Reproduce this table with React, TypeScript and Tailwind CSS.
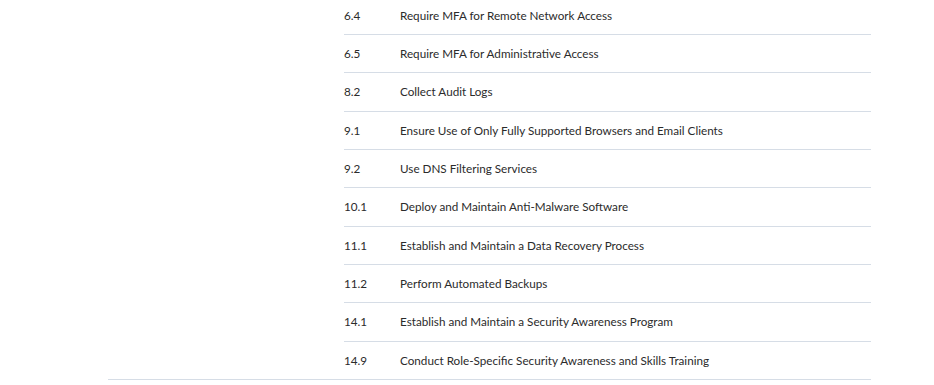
import React from "react";

const rows: [string, string][] = [
  ["6.4", "Require MFA for Remote Network Access"],
  ["6.5", "Require MFA for Administrative Access"],
  ["8.2", "Collect Audit Logs"],
  ["9.1", "Ensure Use of Only Fully Supported Browsers and Email Clients"],
  ["9.2", "Use DNS Filtering Services"],
  ["10.1", "Deploy and Maintain Anti-Malware Software"],
  ["11.1", "Establish and Maintain a Data Recovery Process"],
  ["11.2", "Perform Automated Backups"],
  ["14.1", "Establish and Maintain a Security Awareness Program"],
  ["14.9", "Conduct Role-Specific Security Awareness and Skills Training"],
];

export default function App() {
  return (
    <div className="w-[934px] h-[385px] overflow-hidden bg-white" style={{ fontFamily: "Lato, 'Liberation Sans', sans-serif" }}>
      <div className="ml-[108px] w-[763px] mt-[-3.33px] border-b border-[#d6dde6]">
        <div className="ml-[236px] flex flex-col">
          {rows.map(([n, t], i) => (
            <div
              key={n}
              className={`flex items-center text-[11.7px] text-[#2b2b2b] ${i < rows.length - 1 ? "h-[38.33px] border-b border-[#d6dde6]" : "h-[37.33px]"}`}
            >
              <div className="w-[56px] shrink-0">{n}</div>
              <div>{t}</div>
            </div>
          ))}
        </div>
      </div>
    </div>
  );
}
